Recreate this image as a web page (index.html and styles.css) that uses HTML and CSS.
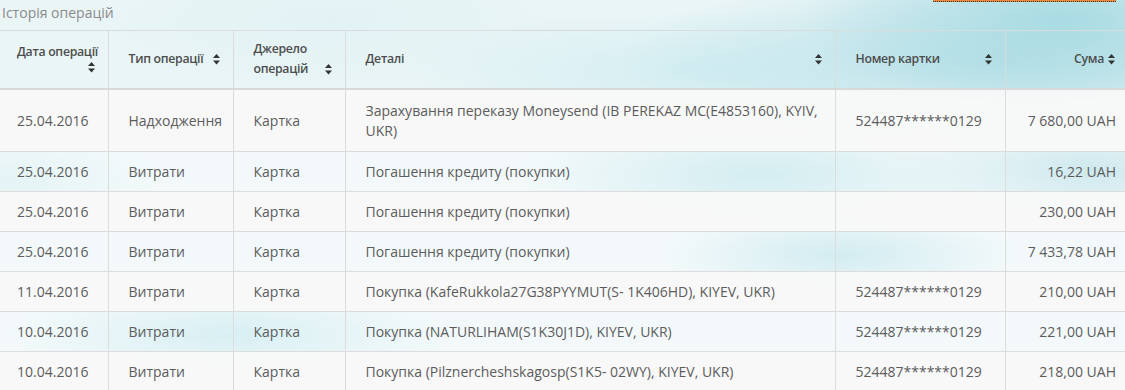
FILE: index.html
```html
<!DOCTYPE html>
<html lang="uk">
<head>
<meta charset="utf-8">
<title>Історія операцій</title>
<link rel="stylesheet" href="styles.css">
</head>
<body>
<div class="page">
  <div class="topbar">
    <div class="title">Історія операцій</div>
    <div class="btn-edge"></div>
  </div>
  <table class="ops">
    <colgroup>
      <col class="c-date"><col class="c-type"><col class="c-src"><col class="c-det"><col class="c-card"><col class="c-sum">
    </colgroup>
    <thead>
      <tr>
        <th class="first"><div class="hcell wrap"><span class="nw">Дата операції</span><svg class="sort" viewBox="0 0 7 11"><path d="M3.5 0L7 4H0Z M0 6.5H7L3.5 10.5Z"/></svg></div></th>
        <th><div class="hcell"><span class="htxt">Тип операції</span><svg class="sort" viewBox="0 0 7 11"><path d="M3.5 0L7 4H0Z M0 6.5H7L3.5 10.5Z"/></svg></div></th>
        <th><div class="hcell"><span class="htxt">Джерело операцій</span><svg class="sort" viewBox="0 0 7 11"><path d="M3.5 0L7 4H0Z M0 6.5H7L3.5 10.5Z"/></svg></div></th>
        <th><div class="hcell"><span class="htxt">Деталі</span><svg class="sort" viewBox="0 0 7 11"><path d="M3.5 0L7 4H0Z M0 6.5H7L3.5 10.5Z"/></svg></div></th>
        <th><div class="hcell"><span class="htxt">Номер картки</span><svg class="sort" viewBox="0 0 7 11"><path d="M3.5 0L7 4H0Z M0 6.5H7L3.5 10.5Z"/></svg></div></th>
        <th class="sum"><div class="hcell end"><span>Сума</span><svg class="sort" viewBox="0 0 7 11"><path d="M3.5 0L7 4H0Z M0 6.5H7L3.5 10.5Z"/></svg></div></th>
      </tr>
    </thead>
    <tbody>
      <tr class="odd tall">
        <td class="first">25.04.2016</td><td>Надходження</td><td>Картка</td>
        <td>Зарахування переказу Moneysend (IB PEREKAZ MC(E4853160), KYIV, UKR)</td>
        <td>524487******0129</td><td class="sum">7 680,00 UAH</td>
      </tr>
      <tr>
        <td class="first">25.04.2016</td><td>Витрати</td><td>Картка</td>
        <td>Погашення кредиту (покупки)</td><td></td><td class="sum">16,22 UAH</td>
      </tr>
      <tr class="odd">
        <td class="first">25.04.2016</td><td>Витрати</td><td>Картка</td>
        <td>Погашення кредиту (покупки)</td><td></td><td class="sum">230,00 UAH</td>
      </tr>
      <tr>
        <td class="first">25.04.2016</td><td>Витрати</td><td>Картка</td>
        <td>Погашення кредиту (покупки)</td><td></td><td class="sum">7 433,78 UAH</td>
      </tr>
      <tr class="odd">
        <td class="first">11.04.2016</td><td>Витрати</td><td>Картка</td>
        <td>Покупка (KafeRukkola27G38PYYMUT(S- 1K406HD), KIYEV, UKR)</td>
        <td>524487******0129</td><td class="sum">210,00 UAH</td>
      </tr>
      <tr>
        <td class="first">10.04.2016</td><td>Витрати</td><td>Картка</td>
        <td>Покупка (NATURLIHAM(S1K30J1D), KIYEV, UKR)</td>
        <td>524487******0129</td><td class="sum">221,00 UAH</td>
      </tr>
      <tr class="odd">
        <td class="first">10.04.2016</td><td>Витрати</td><td>Картка</td>
        <td>Покупка (Pilznercheshskagosp(S1K5- 02WY), KIYEV, UKR)</td>
        <td>524487******0129</td><td class="sum">218,00 UAH</td>
      </tr>
    </tbody>
  </table>
</div>
</body>
</html>
```

FILE: styles.css
```css
html, body {
  margin: 0;
  padding: 0;
}
body {
  width: 1125px;
  height: 390px;
  overflow: hidden;
  font-family: "Open Sans", "Noto Sans", sans-serif;
  color: #5c5c5c;
  background-color: #f4fafb;
  background-image:
    radial-gradient(ellipse 260px 90px at 1060px 20px, #a9dbe3 0%, rgba(169,219,227,0) 100%),
    radial-gradient(ellipse 380px 90px at 1000px 60px, #b9e1e8 0%, rgba(185,225,232,0) 100%),
    radial-gradient(ellipse 300px 60px at 700px 70px, #d4eef2 0%, rgba(212,238,242,0) 100%),
    radial-gradient(ellipse 260px 70px at 330px 20px, #e2f2f4 0%, rgba(226,242,244,0) 100%),
    radial-gradient(ellipse 240px 60px at 760px 175px, #d3edf1 0%, rgba(211,237,241,0) 100%),
    radial-gradient(ellipse 200px 60px at 1090px 170px, #cfe9ee 0%, rgba(207,233,238,0) 100%),
    radial-gradient(ellipse 180px 45px at 840px 255px, #d2ecf1 0%, rgba(210,236,241,0) 100%),
    radial-gradient(ellipse 220px 50px at 230px 335px, #d8eff3 0%, rgba(216,239,243,0) 100%),
    radial-gradient(ellipse 160px 50px at 0px 180px, #e3f3f5 0%, rgba(227,243,245,0) 100%),
    linear-gradient(180deg, #eaf5f6 0px, #e9f5f6 88px, #f3f9fa 89px, #f3f9fa 100%);
}
.page {
  width: 1125px;
}
.topbar {
  display: flex;
  justify-content: space-between;
  align-items: flex-start;
  height: 30px;
}
.title {
  padding: 2px 0 0 2px;
  font-size: 14px;
  line-height: 22px;
  color: #8a8a8a;
}
.btn-edge {
  width: 183px;
  height: 1px;
  margin-right: 9px;
  background: #e8883a;
  border-bottom: 1px dotted #3a3a3a;
}
.ops {
  width: 1125px;
  border-collapse: collapse;
  table-layout: fixed;
  font-size: 14px;
}
.c-date { width: 108px; }
.c-type { width: 125px; }
.c-src { width: 112px; }
.c-det { width: 490px; }
.c-card { width: 170px; }
.c-sum { width: 120px; }

.ops th {
  font-size: 12.3px;
  letter-spacing: -0.3px;
  font-weight: 600;
  color: #4d4d4d;
  line-height: 20px;
  text-align: left;
  vertical-align: middle;
  padding: 8px 13px 9px 20px;
  border-top: 1px solid #d9dcdc;
  border-left: 1px solid #d9dcdc;
  border-bottom: 2px solid #d6d9d9;
}
.ops th.first,
.ops td.first {
  border-left: none;
  padding-left: 17px;
}
.hcell {
  display: flex;
  align-items: flex-end;
  justify-content: space-between;
}
.hcell.wrap {
  flex-wrap: wrap;
}
.hcell.end {
  justify-content: flex-end;
}
.htxt {
  flex: 0 1 auto;
  min-width: 0;
}
.nw {
  white-space: nowrap;
}
.sort {
  flex: 0 0 auto;
  width: 7px;
  height: 11px;
  margin: 0 0 4px auto;
  padding-left: 4px;
  box-sizing: content-box;
  fill: #333;
}
.hcell.end .sort {
  margin-left: 0;
}
.ops th.sum {
  padding-right: 10px;
}
.ops td {
  line-height: 20px;
  vertical-align: middle;
  padding: 10px 13px 9px 20px;
  border-left: 1px solid #dcdcdc;
  border-bottom: 1px solid #dcdcdc;
}
.ops tr.tall td {
  padding-top: 11px;
  padding-bottom: 10px;
}
.ops td.sum {
  text-align: right;
  padding-right: 9px;
}
.ops tr.odd td {
  background: rgba(248, 248, 248, 0.96);
}
```
